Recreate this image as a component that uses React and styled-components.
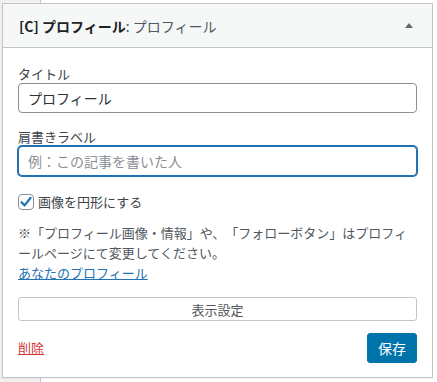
import React, { useState } from 'react';
import styled, { createGlobalStyle } from 'styled-components';

const GlobalStyle = createGlobalStyle`
  html, body {
    margin: 0;
    padding: 0;
    background: #fff;
  }
  body {
    font-family: "Noto Sans CJK JP", "Noto Sans", sans-serif;
    color: #3c434a;
    text-spacing-trim: space-all;
  }
`;

const Page = styled.div`
  width: 437px;
  height: 382px;
  box-sizing: border-box;
  padding: 3px 4px 3px 2px;
  background: linear-gradient(to right, #f0f0f1 0 40px, #c3c4c7 40px 41px, #fff 41px);
`;

const Widget = styled.section`
  border: 1px solid #c3c4c7;
  background: #fff;
  box-shadow: 0 1px 1px rgba(0, 0, 0, 0.04);
`;

const WidgetTop = styled.header`
  height: 43px;
  display: flex;
  align-items: center;
  justify-content: space-between;
  padding: 0 19px 0 16px;
  background: #f6f7f7;
  border-bottom: 1px solid #c3c4c7;
`;

const Title = styled.h3`
  margin: 0;
  font-size: 14px;
  font-weight: 600;
  color: #1d2327;
  line-height: 1;
`;

const InTitle = styled.span`
  font-weight: 400;
  color: #50575e;
`;

const Arrow = styled.span`
  width: 0;
  height: 0;
  border-left: 4px solid transparent;
  border-right: 4px solid transparent;
  border-bottom: 5px solid #646970;
  margin-top: -1px;
`;

const Body = styled.div`
  padding: 16px 15px 14px 15px;
`;

const Label = styled.label`
  display: block;
  font-size: 13px;
  line-height: 19px;
  color: #3c434a;
  margin-top: ${(p) => (p.$first ? '0' : '14px')};
`;

const TextInput = styled.input`
  display: block;
  width: 100%;
  box-sizing: border-box;
  height: 30px;
  padding: 0 9px;
  font-family: inherit;
  font-size: 14px;
  color: #2c3338;
  border: 1px solid ${(p) => (p.$focused ? '#2271b1' : '#8c8f94')};
  box-shadow: ${(p) => (p.$focused ? '0 0 0 1px #2271b1' : 'none')};
  border-radius: 4px;
  outline: none;
  background: #fff;
  &::placeholder {
    color: #8c8f94;
  }
`;

const CheckRow = styled.label`
  display: flex;
  align-items: center;
  gap: 4px;
  margin-top: 16px;
  font-size: 13px;
  line-height: 19px;
  color: #3c434a;
`;

const CheckBox = styled.span`
  width: 16px;
  height: 16px;
  box-sizing: border-box;
  border: 1px solid #8c8f94;
  border-radius: 4px;
  display: flex;
  align-items: center;
  justify-content: center;
  background: #fff;
`;

const Note = styled.p`
  margin: 12px 0 0;
  font-size: 13px;
  line-height: 20px;
  color: #50575e;
`;

const Link = styled.a`
  color: ${(p) => (p.$danger ? '#d63638' : '#2271b1')};
  text-decoration: underline;
  font-size: 13px;
  line-height: 20px;
`;

const WideButton = styled.button`
  display: block;
  width: 100%;
  height: 24px;
  margin-top: 14px;
  box-sizing: border-box;
  border: 1px solid #c3c4c7;
  border-radius: 3px;
  background: #fff;
  font-family: inherit;
  font-size: 13px;
  color: #50575e;
  padding: 0;
`;

const Footer = styled.div`
  display: flex;
  justify-content: space-between;
  align-items: flex-start;
  margin-top: 12px;
`;

const DeleteWrap = styled.div`
  margin-top: 1px;
`;

const SaveButton = styled.button`
  height: 30px;
  padding: 0 10px;
  border: 1px solid #0073aa;
  border-radius: 3px;
  background: #0073aa;
  color: #fff;
  font-family: inherit;
  font-size: 14px;
`;

export default function App() {
  const [title, setTitle] = useState('プロフィール');
  return (
    <>
      <GlobalStyle />
      <Page>
        <Widget>
          <WidgetTop>
            <Title>
              [C] プロフィール<InTitle>: プロフィール</InTitle>
            </Title>
            <Arrow />
          </WidgetTop>
          <Body>
            <Label $first>タイトル</Label>
            <TextInput value={title} onChange={(e) => setTitle(e.target.value)} />
            <Label>肩書きラベル</Label>
            <TextInput $focused placeholder="例：この記事を書いた人" />
            <CheckRow>
              <CheckBox>
                <svg width="14" height="14" viewBox="0 0 14 14">
                  <path d="M2.6 7.2 L5.6 10.4 L11.6 2.8" fill="none" stroke="#2271b1" strokeWidth="2.2" strokeLinecap="round" strokeLinejoin="round" />
                </svg>
              </CheckBox>
              画像を円形にする
            </CheckRow>
            <Note>
              ※「プロフィール画像・情報」や、「フォローボタン」はプロフィールページにて変更してください。
              <br />
              <Link href="#">あなたのプロフィール</Link>
            </Note>
            <WideButton>表示設定</WideButton>
            <Footer>
              <DeleteWrap>
                <Link $danger href="#">削除</Link>
              </DeleteWrap>
              <SaveButton>保存</SaveButton>
            </Footer>
          </Body>
        </Widget>
      </Page>
    </>
  );
}
